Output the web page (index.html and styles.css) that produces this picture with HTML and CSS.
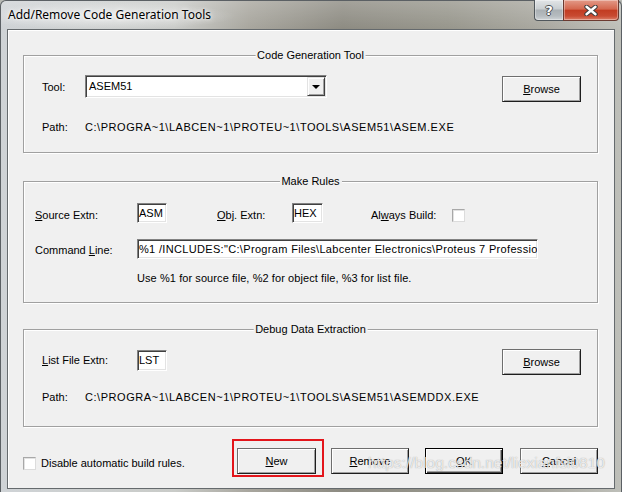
FILE: index.html
```html
<!DOCTYPE html>
<html>
<head>
<meta charset="utf-8">
<title>Add/Remove Code Generation Tools</title>
<link rel="stylesheet" href="styles.css">
</head>
<body>
<div class="window">
  <div class="titlebar">
    <span class="title">Add/Remove Code Generation Tools</span>
    <div class="caption-btns">
      <div class="cap-btn help"><span class="help-glyph">?</span></div>
      <div class="cap-btn close">
        <svg width="14" height="11" viewBox="0 0 14 11">
          <path d="M2.5 1.8 L11.5 9.2 M11.5 1.8 L2.5 9.2" stroke="#3a3a3a" stroke-width="4.4" stroke-linecap="round" fill="none"/>
          <path d="M2.5 1.8 L11.5 9.2 M11.5 1.8 L2.5 9.2" stroke="#ffffff" stroke-width="2.4" stroke-linecap="round" fill="none"/>
        </svg>
      </div>
    </div>
  </div>

  <div class="client">
    <section class="group g1">
      <div class="group-title">Code Generation Tool</div>
      <div class="row">
        <span class="lbl lbl-short tool-lbl">Tool:</span>
        <div class="combo">
          <span class="combo-text">ASEM51</span>
          <span class="combo-btn"><span class="tri"></span></span>
        </div>
        <button class="btn browse"><u>B</u>rowse</button>
      </div>
      <div class="row path-row p1">
        <span class="lbl lbl-short">Path:</span>
        <span class="path">C:\PROGRA~1\LABCEN~1\PROTEU~1\TOOLS\ASEM51\ASEM.EXE</span>
      </div>
    </section>

    <section class="group g2">
      <div class="group-title">Make Rules</div>
      <div class="row r-src">
        <span class="lbl lbl-wide lbl-field"><u>S</u>ource Extn:</span>
        <span class="field f-ext">ASM</span>
        <span class="lbl lbl-obj lbl-field"><u>O</u>bj. Extn:</span>
        <span class="field f-hex">HEX</span>
        <span class="lbl lbl-always lbl-field">Al<u>w</u>ays Build:</span>
        <span class="chk chk-always"></span>
      </div>
      <div class="row r-cmd">
        <span class="lbl lbl-wide lbl-cmd">Command <u>L</u>ine:</span>
        <span class="field f-cmd">%1 /INCLUDES:"C:\Program Files\Labcenter Electronics\Proteus 7 Professional\Tools\ASEM51"</span>
      </div>
      <div class="hint">Use %1 for source file, %2 for object file, %3 for list file.</div>
    </section>

    <section class="group g3">
      <div class="group-title">Debug Data Extraction</div>
      <div class="row">
        <span class="lbl lbl-list"><u>L</u>ist File Extn:</span>
        <span class="field f-lst">LST</span>
        <button class="btn browse b3"><u>B</u>rowse</button>
      </div>
      <div class="row path-row p3">
        <span class="lbl lbl-short">Path:</span>
        <span class="path">C:\PROGRA~1\LABCEN~1\PROTEU~1\TOOLS\ASEM51\ASEMDDX.EXE</span>
      </div>
    </section>

    <div class="bottom">
      <span class="chk chk-disable"></span>
      <span class="disable-lbl">Disable automatic build rules.</span>
      <div class="hl"><button class="btn b-new"><u>N</u>ew</button></div>
      <button class="btn b-remove"><u>R</u>emove</button>
      <button class="btn b-ok default"><u>O</u>K</button>
      <button class="btn b-cancel"><u>C</u>ancel</button>
    </div>
  </div>

  <div class="watermark">https://blog.csdn.net/liexianfsi0810</div>
</div>
</body>
</html>
```

FILE: styles.css
```css
* { box-sizing: border-box; }
html, body { margin: 0; padding: 0; }
body {
  width: 622px;
  height: 492px;
  overflow: hidden;
  background: #b7b9b4;
  font-family: "Liberation Sans", Arial, sans-serif;
  font-size: 11px;
  color: #000;
}

.window {
  position: relative;
  width: 622px;
  height: 492px;
  display: flex;
  flex-direction: column;
  border: 1px solid #5b6064;
  border-bottom: none;
  border-radius: 6px 6px 0 0;
  background:
    radial-gradient(ellipse 130px 14px at 105px 15px, rgba(255,255,255,.55), rgba(255,255,255,0)),
    linear-gradient(to bottom, rgba(255,255,255,.2), rgba(255,255,255,0) 28px),
    linear-gradient(to right, #cfd3d6 0%, #c9cbc8 28%, #a8a69e 40%, #8d8b82 55%, #97968c 72%, #aaa9a1 88%, #bebfb9 100%);
}

/* title bar */
.titlebar {
  height: 28px;
  display: flex;
  justify-content: space-between;
  align-items: flex-start;
}
.title {
  margin: 6px 0 0 7px;
  font-family: "Noto Sans", "Open Sans", sans-serif;
  font-size: 12px;
  line-height: 16px;
  color: #000;
  text-shadow: 0 0 6px rgba(255,255,255,.9), 0 0 3px rgba(255,255,255,.9);
}
.caption-btns {
  display: flex;
  margin: -1px 2px 0 0;
}
.cap-btn {
  height: 21px;
  display: flex;
  align-items: center;
  justify-content: center;
  border: 1px solid #50575c;
  border-top: none;
  box-shadow: inset 0 0 0 1px rgba(255,255,255,.35);
}
.help {
  width: 29px;
  border-right: none;
  border-radius: 0 0 0 4px;
  background: linear-gradient(to bottom, #e2e5e7 0%, #c9ced1 45%, #aab0b4 50%, #b6bcc0 80%, #d0d5d8 100%);
}
.help-glyph {
  font-family: "DejaVu Sans", sans-serif;
  font-weight: bold;
  font-size: 13px;
  line-height: 13px;
  color: #fff;
  text-shadow: -1px 0 #4a4f53, 1px 0 #4a4f53, 0 -1px #4a4f53, 0 1px #4a4f53;
}
.close {
  width: 56px;
  border-radius: 0 0 4px 0;
  border-color: #6b3a30;
  background: linear-gradient(to bottom, #e39a88 0%, #d4684f 45%, #c23c22 52%, #c84a31 80%, #dc8068 100%);
}
.close svg { display: block; }

/* client */
.client {
  flex: 1;
  margin: 0 6px 3px 6px;
  border: 1px solid #656a6d;
  background: #f0f0f0;
  box-shadow: inset 1px 1px 0 #fff;
  padding: 25px 16px 0 15px;
  display: flex;
  flex-direction: column;
}

.group {
  position: relative;
  border: 1px solid #a0a0a0;
  box-shadow: inset 1px 1px 0 #fff, 1px 1px 0 #fff;
  flex: none;
}
.group-title {
  position: absolute;
  top: -8px;
  left: 50%;
  transform: translateX(-50%);
  padding: 0 2px;
  background: #f0f0f0;
  line-height: 14px;
  white-space: nowrap;
}
.g1 { height: 98px; padding: 19px 16px 0 18px; }
.g2 { height: 122px; margin-top: 28px; padding: 21px 16px 0 11px; }
.g3 { height: 98px; margin-top: 26px; padding: 19px 16px 0 18px; }

.row { display: flex; align-items: flex-start; }
.lbl { flex: none; white-space: nowrap; }
.lbl-short { width: 43px; }
.tool-lbl { line-height: 23px; margin-top: 1px; }
.path-row { line-height: 14px; }
.p1 { margin-top: 18px; }
.p3 { margin-top: 15px; }
.path { letter-spacing: 0.55px; white-space: nowrap; }

/* combo */
.combo {
  width: 242px;
  height: 23px;
  display: flex;
  background: #fff;
  border: 1px solid;
  border-color: #828282 #fff #fff #828282;
  box-shadow: inset 1px 1px 0 #404040, inset -1px -1px 0 #e3e3e3;
  padding: 1px;
}
.combo-text { flex: 1; line-height: 19px; padding-left: 2px; }
.combo-btn {
  width: 18px;
  height: 19px;
  background: #f0f0f0;
  border: 1px solid;
  border-color: #e3e3e3 #404040 #404040 #e3e3e3;
  box-shadow: inset 1px 1px 0 #fff, inset -1px -1px 0 #a0a0a0;
  display: flex;
  align-items: center;
  justify-content: center;
}
.tri {
  width: 0;
  height: 0;
  border-left: 4px solid transparent;
  border-right: 4px solid transparent;
  border-top: 4px solid #000;
  margin-top: 1px;
}

/* buttons */
.btn {
  flex: none;
  font-family: inherit;
  font-size: 11px;
  color: #000;
  width: 79px;
  height: 26px;
  padding: 0;
  text-align: center;
  line-height: 24px;
  background: #f0f0f0;
  border: 1px solid;
  border-color: #6e6e6e #1e1e1e #1e1e1e #6e6e6e;
  box-shadow: inset 1px 1px 0 #fff, inset -1px -1px 0 #a0a0a0;
}
.btn.default {
  border-color: #000;
  box-shadow: inset 1px 1px 0 #fff, inset -1px -1px 0 #404040, inset -2px -2px 0 #a0a0a0;
}
.browse { margin-left: auto; margin-top: 1px; }
.b3 { margin-top: 0; }

/* fields */
.field {
  flex: none;
  display: block;
  background: #fff;
  border: 1px solid;
  border-color: #828282 #fff #fff #828282;
  box-shadow: inset 1px 1px 0 #404040, inset -1px -1px 0 #e3e3e3;
  padding-left: 1px;
  white-space: nowrap;
  overflow: hidden;
}
.r-src { height: 20px; }
.lbl-field { line-height: 20px; padding-top: 2px; }
.lbl-wide { width: 102px; }
.f-ext { width: 30px; height: 20px; line-height: 18px; }
.lbl-obj { margin-left: 50px; width: 75px; }
.f-hex { width: 31px; height: 20px; line-height: 18px; }
.lbl-always { margin-left: 48px; width: 81px; }
.chk {
  flex: none;
  display: block;
  width: 13px;
  height: 13px;
  background: #fff;
  border: 1px solid;
  border-color: #a8a8a8 #dcdcdc #dcdcdc #a8a8a8;
  box-shadow: inset 1px 1px 0 #e2e2e2;
}
.chk-always { margin-top: 6px; }
.r-cmd { margin-top: 16px; }
.lbl-cmd { line-height: 20px; padding-top: 1px; }
.f-cmd { width: 401px; height: 20px; line-height: 18px; letter-spacing: 0.33px; }
.hint { margin: 11px 0 0 102px; line-height: 14px; white-space: nowrap; letter-spacing: 0.08px; }

.lbl-list { width: 95px; line-height: 21px; margin-top: 1px; }
.f-lst { width: 30px; height: 21px; line-height: 19px; margin-top: 1px; }

/* bottom row */
.bottom {
  display: flex;
  align-items: flex-start;
  margin-top: 21px;
  height: 26px;
}
.chk-disable { margin: 9px 5px 0 0; }
.disable-lbl { line-height: 14px; margin-top: 8px; white-space: nowrap; }
.hl { position: relative; margin-left: auto; flex: none; }
.hl::after {
  content: "";
  position: absolute;
  left: -5px;
  right: -8px;
  top: -9px;
  bottom: -3px;
  border: 2px solid #e3151b;
  pointer-events: none;
}
.b-new { display: block; }
.b-remove { width: 78px; margin-left: 15px; }
.b-ok { width: 78px; margin-left: 16px; }
.b-cancel { width: 78px; margin-left: 17px; }

.watermark {
  position: absolute;
  left: 367px;
  top: 452px;
  font-family: "Liberation Sans", Arial, sans-serif;
  font-size: 15.5px;
  line-height: 20px;
  color: rgba(255,255,255,.78);
  text-shadow: 0 0 1px rgba(110,110,110,.7);
  white-space: nowrap;
  pointer-events: none;
}
```
